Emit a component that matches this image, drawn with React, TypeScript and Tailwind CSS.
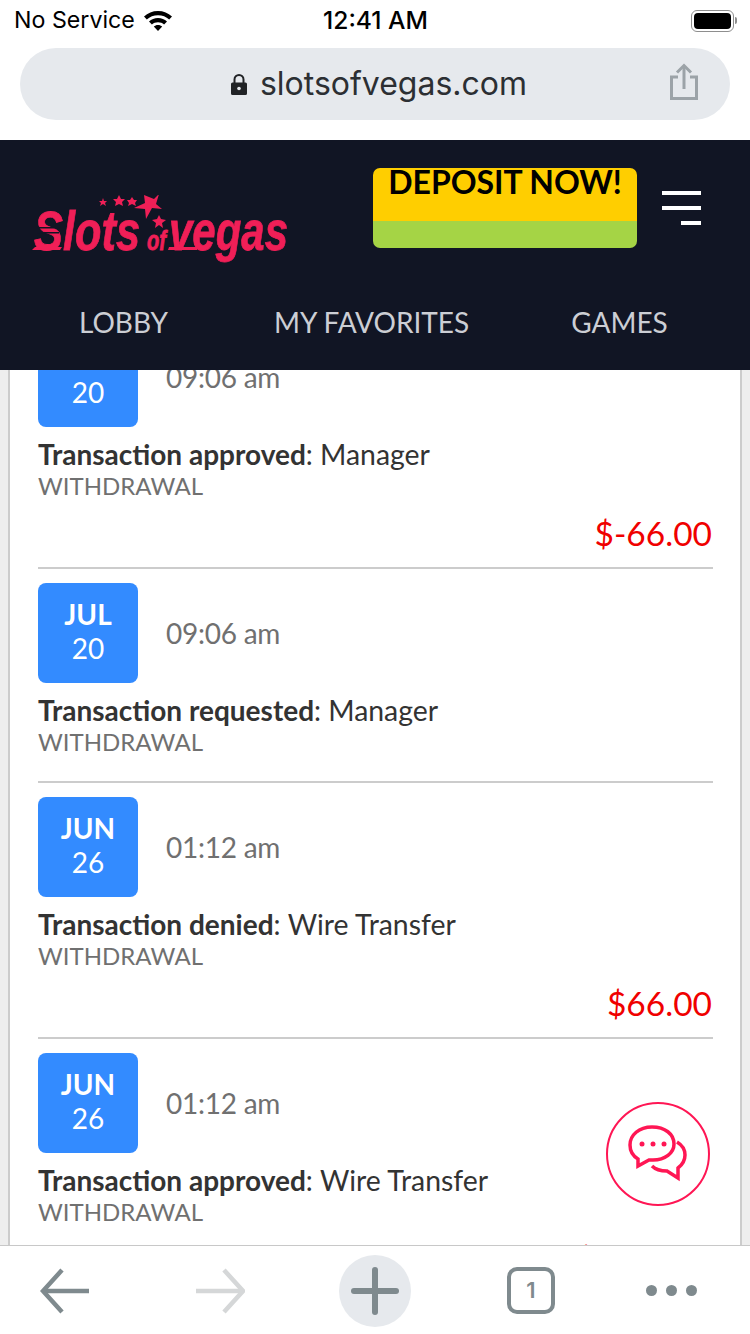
const transactions = [
  { month: "JUL", day: "20", time: "09:06 am", status: "Transaction approved", method: "Manager", amount: "$-66.00" },
  { month: "JUL", day: "20", time: "09:06 am", status: "Transaction requested", method: "Manager" },
  { month: "JUN", day: "26", time: "01:12 am", status: "Transaction denied", method: "Wire Transfer", amount: "$66.00" },
  { month: "JUN", day: "26", time: "01:12 am", status: "Transaction approved", method: "Wire Transfer", amount: "$-166.00" },
];

function StatusBar() {
  return (
    <div className="flex h-10 shrink-0 items-center justify-between pl-[14px] pr-[13px] pt-[1px] font-['Inter',sans-serif] text-[23.2px] text-black">
      <div className="flex w-[220px] items-center gap-[8px]">
        <span>No Service</span>
        <svg width="30" height="22" viewBox="0 0 30 22" fill="#000">
          <path d="M15 2C9.500 2 4.800 4 1 7.600l2.800 3C6.800 7.700 10.700 6.200 15 6.200s8.200 1.500 11.200 4.400l2.800-3C25.200 4 20.500 2 15 2z" />
          <path d="M15 9c-3.500 0-6.600 1.300-9 3.500l2.900 3c1.600-1.500 3.700-2.300 6.100-2.300s4.500.8 6.100 2.300l2.900-3C21.600 10.300 18.500 9 15 9z" />
          <path d="M15 16c-1.700 0-3.100.6-4.200 1.600L15 22l4.200-4.400C18.100 16.600 16.700 16 15 16z" />
        </svg>
      </div>
      <span className="text-[24.6px] font-medium">12:41 AM</span>
      <div className="flex w-[220px] items-center justify-end">
        <div className="flex h-[22px] w-[43px] items-center rounded-[6px] border-[1.5px] border-[#8e8e8e] p-[2px]">
          <div className="h-full w-full rounded-[4px] bg-black" />
        </div>
        <div className="ml-[1px] h-[7px] w-[2px] rounded-r-sm bg-[#8e8e8e]" />
      </div>
    </div>
  );
}

function UrlBar() {
  return (
    <div className="h-[100px] shrink-0 px-5 pt-2">
      <div className="relative flex h-[72px] items-center justify-center rounded-full bg-[#e6e9ed] pl-2 font-['Inter',sans-serif] text-[#2c2f33]">
        <svg width="16" height="21" viewBox="0 0 16 21" fill="#212326" className="mr-[13px]">
          <path d="M1.500 8.500h13A1.500 1.500 0 0 1 16 10v9.500a1.500 1.500 0 0 1-1.500 1.500h-13A1.500 1.500 0 0 1 0 19.500V10a1.500 1.500 0 0 1 1.500-1.500z" />
          <path d="M3.500 9V5.500a4.500 4.500 0 0 1 9 0V9" fill="none" stroke="#212326" strokeWidth="2" />
          <circle cx="8" cy="14.500" r="1.800" fill="#e6e9ed" />
        </svg>
        <span className="text-[32px] leading-none">slotsofvegas.com</span>
        <svg width="30" height="38" viewBox="0 0 30 38" fill="none" stroke="#9ca3a8" strokeWidth="3" className="absolute right-[31px] top-[15px]">
          <path d="M9 14H2.500v21.500h25V14H21" />
          <path d="M15 26V3" />
          <path d="M8 9.500 15 2.500l7 7" />
        </svg>
      </div>
    </div>
  );
}

function Logo() {
  return (
    <svg width="260" height="76" viewBox="0 0 260 76" fill="#f01f57" className="mt-[55px] shrink-0">
      <polygon points="71,3 72,6 75,6 73,8 74,11 71,9 68,11 69,8 67,6 70,6" />
      <polygon points="87,0 89,4 93,4 90,7 91,11 87,9 83,11 84,7 81,4 85,4" />
      <polygon points="100,2 102,5 105,5 103,8 104,11 100,9 96,11 97,8 95,5 98,5" />
      <polygon points="112,0 122,4 127,-1 124,9 130,14 120,13 114,24 113,14 102,13 113,8" />
      <polygon points="127,20 129,24 134,25 130,28 131,33 127,30 123,33 124,28 120,25 125,24" />
      <g fontFamily="'Liberation Sans',sans-serif" fontWeight="700" fontStyle="italic" stroke="#f01f57" strokeWidth="0.8">
        <text x="2" y="55" fontSize="56" textLength="106" lengthAdjust="spacingAndGlyphs">Slots</text>
        <text x="115" y="55" fontSize="27" textLength="19" lengthAdjust="spacingAndGlyphs">of</text>
        <text x="137" y="55" fontSize="56" textLength="119" lengthAdjust="spacingAndGlyphs">vegas</text>
      </g>
      <polygon points="0,55 28,55 30,52 3,52" />
      <polygon points="136,55 165,55 166,52 137,52" />
      <rect x="5" y="32" width="22" height="1.500" fill="#111524" />
      <rect x="5" y="37" width="22" height="1.500" fill="#111524" />
    </svg>
  );
}

function Header() {
  return (
    <header className="h-[230px] shrink-0 bg-[#111524] font-['Lato',sans-serif]">
      <div className="flex h-[150px] items-start pl-8 pr-[49px]">
        <Logo />
        <div className="ml-[81px] mt-7 flex h-20 w-[264px] shrink-0 flex-col">
          <div className="h-[53px] rounded-t-[7px] bg-[#ffce00] text-center text-[32px] font-bold leading-[28px] tracking-[-0.05px] text-black">
            DEPOSIT NOW!
          </div>
          <div className="h-[27px] rounded-b-[7px] bg-[#a5d445]" />
        </div>
        <div className="ml-[25px] mt-[51px] flex w-[39px] shrink-0 flex-col items-end gap-[11px]">
          <div className="h-1 w-full bg-white" />
          <div className="h-1 w-full bg-white" />
          <div className="h-1 w-5 bg-white" />
        </div>
      </div>
      <nav className="flex items-center pl-[79px] pt-[13px] text-[28px] leading-[38px] text-[#ccced4]">
        <span>LOBBY</span>
        <span className="ml-[106px]">MY FAVORITES</span>
        <span className="ml-[102px]">GAMES</span>
      </nav>
    </header>
  );
}

type Transaction = (typeof transactions)[number];

function Row({ tx }: { tx: Transaction }) {
  return (
    <div className="border-b-2 border-[#cccccc] pt-[14px]">
      <div className="flex items-center">
        <div className="flex h-[100px] w-[100px] shrink-0 flex-col items-center justify-center rounded-[8px] bg-[#338bff] pb-1 text-[28px] leading-[34px] text-white">
          <span className="font-bold">{tx.month}</span>
          <span>{tx.day}</span>
        </div>
        <span className="ml-[28px] text-[28px] tracking-[-0.25px] text-[#707070]">{tx.time}</span>
      </div>
      <p className="mt-[10px] text-[28px] leading-[34px] text-[#333333]">
        <b className="font-bold">{tx.status}</b>: <span className="text-[28.4px]">{tx.method}</span>
      </p>
      <p className="text-[24px] leading-[30px] text-[#707070]">WITHDRAWAL</p>
      {tx.amount ? (
        <p className="mr-[1px] mt-[11px] h-[42px] text-right text-[33.5px] leading-[42px] text-[#f00000]">{tx.amount}</p>
      ) : null}
      <div className={tx.amount ? "h-[13px]" : "h-[24px]"} />
    </div>
  );
}

function ChatButton() {
  return (
    <button className="absolute left-[606px] top-[1102px] flex h-[104px] w-[104px] items-center justify-center rounded-full border-2 border-[#ff1654] bg-white">
      <svg width="60" height="58" viewBox="0 0 60 58" fill="none" stroke="#ff1654" strokeWidth="3.500" strokeLinejoin="miter">
        <path d="M24 2C11 2 2 10 2 20c0 6 3 11 8 14v7l11-6h4c12 0 21-7 21-16C46 9 37 2 24 2z" />
        <path d="M49 17c5 3 8 8 8 13 0 6-3 10-7 13v10l-11-7c-6 0-11-1-15-5" />
        <circle cx="14" cy="19" r="2.500" fill="#ff1654" stroke="none" />
        <circle cx="25" cy="19" r="2.500" fill="#ff1654" stroke="none" />
        <circle cx="36" cy="19" r="2.500" fill="#ff1654" stroke="none" />
      </svg>
    </button>
  );
}

function Toolbar() {
  return (
    <footer className="flex h-[89px] shrink-0 items-center border-t border-[#c8c8c8] bg-white pl-[40px] pt-[1px]">
      <svg width="50" height="46" viewBox="0 0 50 46" fill="none" stroke="#7f8a8e" strokeWidth="4.500">
        <path d="M3 23h46" />
        <path d="M22 2 3 23l19 21" />
      </svg>
      <svg width="50" height="46" viewBox="0 0 50 46" fill="none" stroke="#d5d7d8" strokeWidth="4.500" className="ml-[105px]">
        <path d="M1 23h47" />
        <path d="M29 2l19 21-19 21" />
      </svg>
      <div className="ml-[94px] flex h-[72px] w-[72px] items-center justify-center rounded-full bg-[#e6e9ed]">
        <svg width="48" height="48" viewBox="0 0 48 48" fill="none" stroke="#7f8a8e" strokeWidth="6" strokeLinecap="round">
          <path d="M3 24h42" />
          <path d="M24 3v42" />
        </svg>
      </div>
      <div className="ml-[96px] flex h-[47px] w-[48px] items-center justify-center rounded-[10px] border-[4px] border-[#7f8a8e] font-['Inter',sans-serif] text-[22px] font-semibold text-[#7f8a8e]">
        1
      </div>
      <div className="ml-[91px] flex items-center gap-[9px]">
        <div className="h-[11px] w-[11px] rounded-full bg-[#7f8a8e]" />
        <div className="h-[11px] w-[11px] rounded-full bg-[#7f8a8e]" />
        <div className="h-[11px] w-[11px] rounded-full bg-[#7f8a8e]" />
      </div>
    </footer>
  );
}

export default function App() {
  return (
    <div className="relative flex h-[1334px] w-[750px] flex-col overflow-hidden bg-white">
      <StatusBar />
      <UrlBar />
      <Header />
      <main className="min-h-0 flex-1 overflow-hidden bg-[#eeeeee] px-2 font-['Lato',sans-serif]">
        <div className="-mt-[57px] border-x-2 border-[#cccccc] bg-white pl-[28px] pr-[27px]">
          {transactions.map((tx) => (
            <Row key={tx.status + tx.method} tx={tx} />
          ))}
        </div>
      </main>
      <Toolbar />
      <ChatButton />
    </div>
  );
}
